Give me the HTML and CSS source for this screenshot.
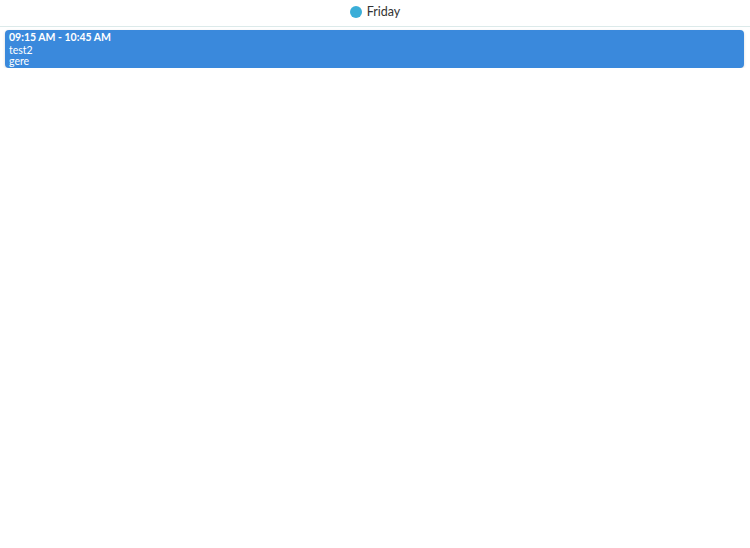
FILE: index.html
```html
<!DOCTYPE html>
<html lang="en">
<head>
    <meta charset="UTF-8">
    <meta name="viewport" content="width=device-width, initial-scale=1.0">
    <title>Day View</title>
    <link rel="stylesheet" href="styles.css">
</head>
<body>
    <div class="day-header">
        <span class="day-dot"></span>
        <span class="day-name">Friday</span>
    </div>
    <div class="event-list">
        <div class="event-item">
            <div class="event-time">09:15 AM - 10:45 AM</div>
            <div class="event-title">test2</div>
            <div class="event-desc">gere</div>
        </div>
    </div>
</body>
</html>
```

FILE: styles.css
```css
body {
    margin: 0;
    font-family: Lato, "Open Sans", sans-serif;
    background-color: #fff;
    color: #333;
}
.day-header {
    display: flex;
    align-items: center;
    justify-content: center;
    gap: 5px;
    height: 23px;
    padding-bottom: 3px;
    border-bottom: 1px solid #dceaea;
}
.day-dot {
    width: 12px;
    height: 12px;
    border-radius: 50%;
    background-color: #3aaed8;
}
.day-name {
    font-size: 12.5px;
    color: #333;
}
.event-list {
    padding: 3px 6px 0 5px;
}
.event-item {
    background-color: #3a89dc;
    color: #fff;
    border-radius: 4px;
    padding: 1px 4px;
    height: 36px;
    box-shadow: 0 1px 3px rgba(0, 0, 0, 0.15);
    font-size: 10.5px;
    line-height: 10.5px;
}
.event-time {
    font-weight: bold;
    line-height: 13px;
    margin-bottom: 1px;
}
```
